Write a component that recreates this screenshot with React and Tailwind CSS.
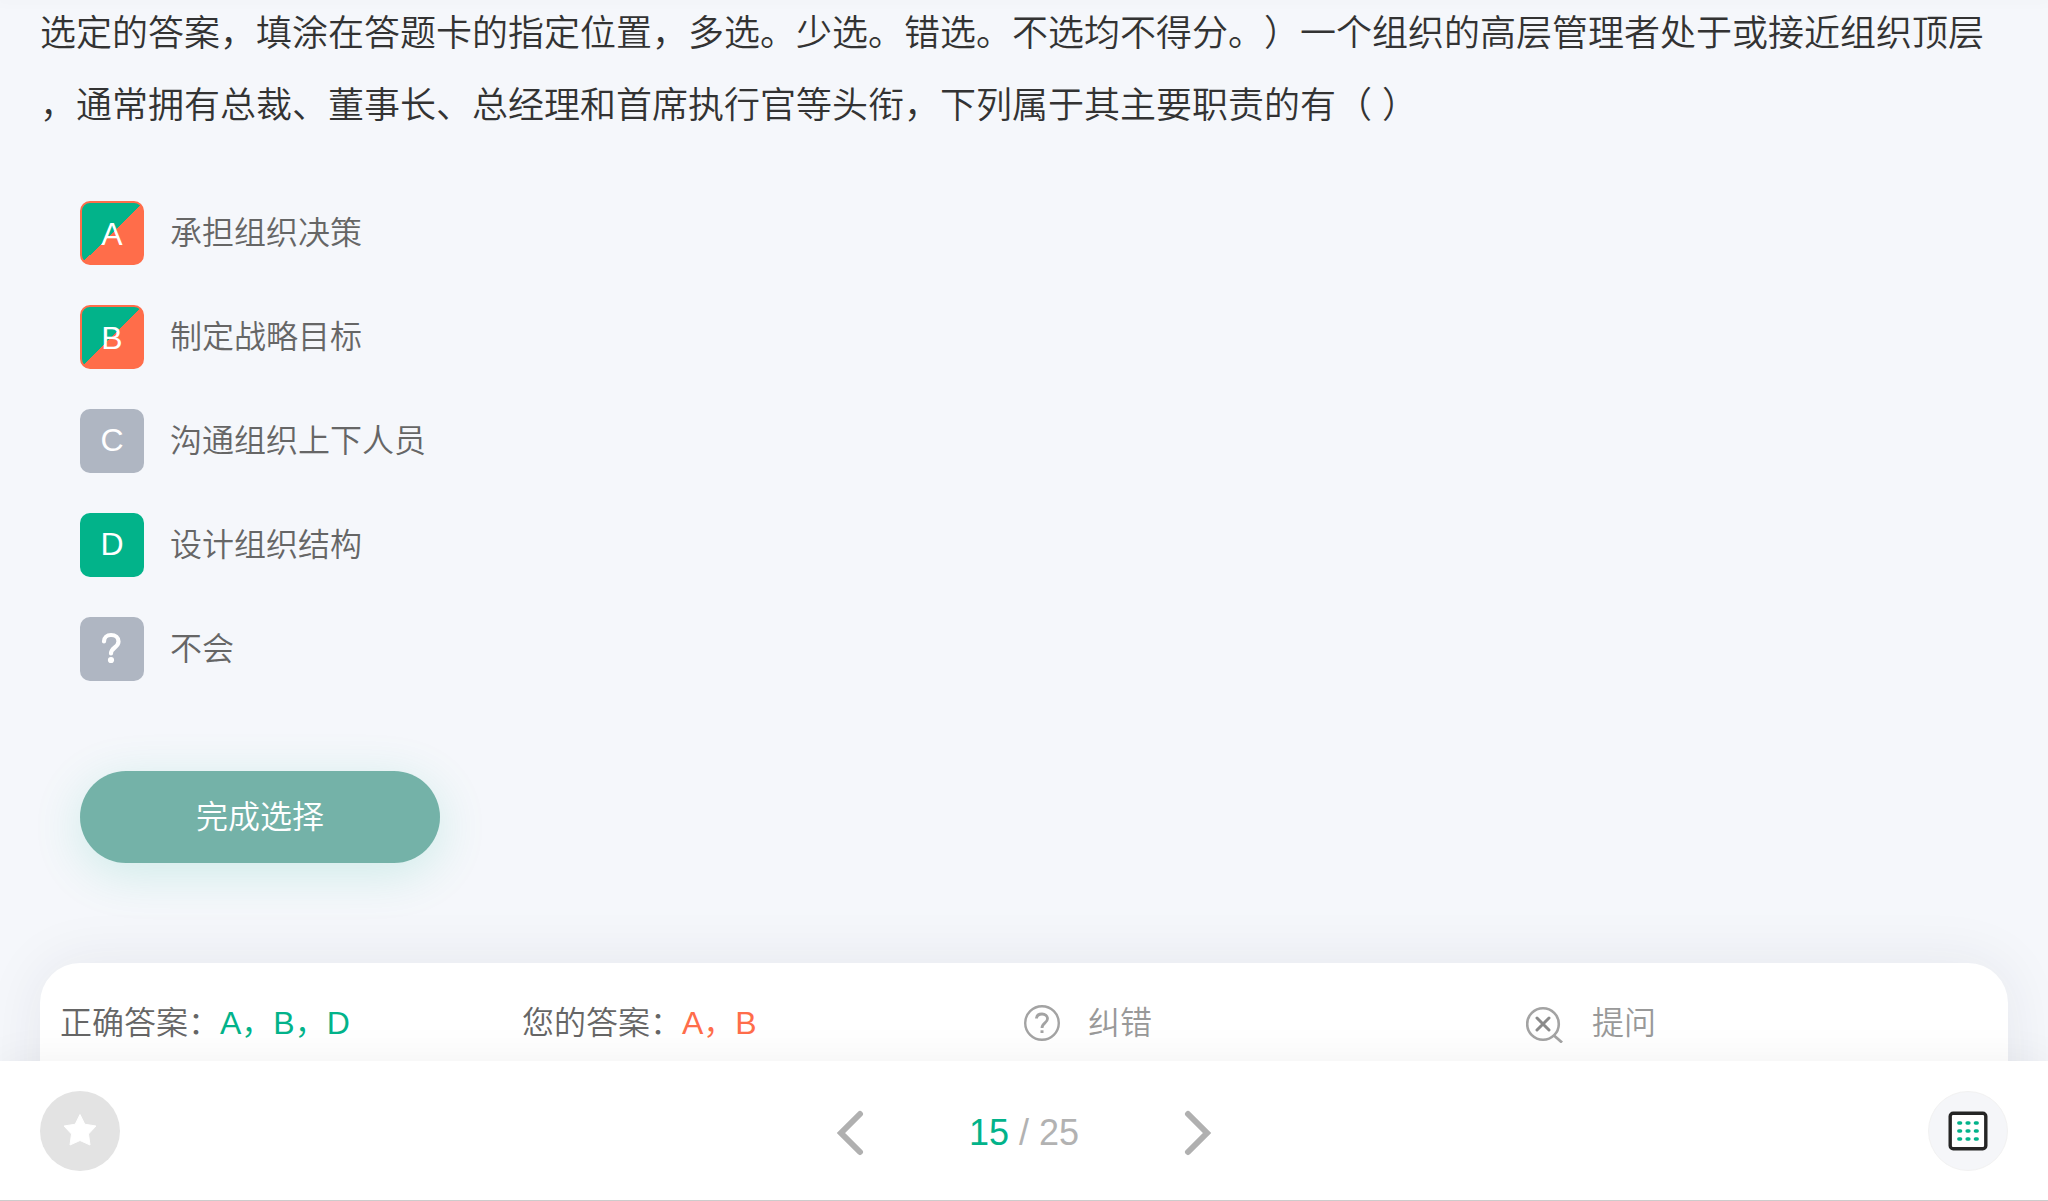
import React, { useState } from 'react';
import clsx from 'clsx';

const QUESTION =
    '选定的答案，填涂在答题卡的指定位置，多选。少选。错选。不选均不得分。）一个组织的高层管理者处于或接近组织顶层，通常拥有总裁、董事长、总经理和首席执行官等头衔，下列属于其主要职责的有（ ）';

const OPTIONS = [
    { key: 'A', text: '承担组织决策', state: 'picked' },
    { key: 'B', text: '制定战略目标', state: 'picked' },
    { key: 'C', text: '沟通组织上下人员', state: 'idle' },
    { key: 'D', text: '设计组织结构', state: 'missed' },
    { key: 'unknown', text: '不会', state: 'idle' },
];

const QuestionMark = () => (
    <svg viewBox="0 0 64 64" className="w-16 h-16" fill="none" aria-hidden="true">
        <path
            d="M24 24.5C24 20.5 27 18 31 18C35.500 18 38.500 20.800 38.500 24.500C38.500 30.500 31 30.500 31 36.500"
            stroke="white"
            strokeWidth="4.2"
            strokeLinecap="round"
        />
        <circle cx="31" cy="43" r="3.1" fill="white" />
    </svg>
);

const Option = ({ option, onSelect }) => (
    <button type="button" onClick={() => onSelect(option.key)} className="flex items-center gap-[26px] text-left">
        <span
            className={clsx(
                'w-16 h-16 rounded-[10px] text-center text-white leading-[62px] overflow-hidden',
                option.state === 'picked' &&
                    'border-2 border-[#ff6d4a] bg-[linear-gradient(135deg,#02b38a_50%,#ff6d4a_50%)]',
                option.state === 'missed' && 'bg-[#02b38a]',
                option.state === 'idle' && 'bg-[#afb6c2]'
            )}
        >
            {option.key === 'unknown' ? <QuestionMark /> : option.key}
        </span>
        <span className="text-[#666]">{option.text}</span>
    </button>
);

const HelpIcon = () => (
    <svg viewBox="0 0 36 36" className="w-9 h-9" fill="none" stroke="#a3a3a3" aria-hidden="true">
        <circle cx="18" cy="18" r="16.8" strokeWidth="2.4" />
        <path d="M12.500 13.500C12.700 10.500 15 9 18 9C21.200 9 23.500 11 23.500 13.800C23.500 18 18 17.800 18 23" strokeWidth="2.8" />
        <path d="M18 25.300V28" strokeWidth="3" />
    </svg>
);

const AskIcon = () => (
    <svg viewBox="0 0 38 40" className="w-[38px] h-10" fill="none" stroke="#a3a3a3" aria-hidden="true">
        <circle cx="17" cy="21" r="15.800" strokeWidth="2.6" />
        <path d="M28 32.500L36 39.500" strokeWidth="2.8" />
        <path d="M11 15L23 27M23 15L11 27" stroke="#8a8a8a" strokeWidth="3" strokeLinecap="round" />
    </svg>
);

const Chevron = ({ points }) => (
    <svg viewBox="0 0 28 46" className="w-7 h-[46px]" fill="none" aria-hidden="true">
        <polyline points={points} stroke="#b0b0b0" strokeWidth="6" strokeLinecap="round" />
    </svg>
);

const StarIcon = () => (
    <svg viewBox="0 0 36 36" className="w-9 h-9" aria-hidden="true">
        <path
            d="M18 1.500L22.800 11.200L34 13L26.500 21L28 32L18 27.500L8 32L9.500 21L2 13L13.200 11.200Z"
            fill="white"
            stroke="white"
            strokeWidth="1"
            strokeLinejoin="round"
        />
    </svg>
);

const SheetIcon = () => (
    <svg viewBox="0 0 40 40" className="w-10 h-10" aria-hidden="true">
        <rect x="2.200" y="2.200" width="35.600" height="35.600" rx="3" fill="white" stroke="#252525" strokeWidth="3.400" />
        {[12, 20, 28].map(y =>
            [11.7, 20, 28.3].map(x => (
                <rect key={`${x}-${y}`} x={x - 2.6} y={y - 1.7} width="5.200" height="3.400" rx="1.700" fill="#02b38a" />
            ))
        )}
    </svg>
);

const AnswerPanel = () => (
    <section className="mx-10 mt-25 h-60 shrink-0 rounded-[40px] bg-white px-5 pt-9 shadow-[0_0_60px_rgba(40,40,70,0.08)]">
        <div className="grid grid-cols-[23fr_25fr_25fr_23fr] items-center leading-12">
            <p className="text-[#666]">
                正确答案：<span className="text-[#02b38a]">A，B，D</span>
            </p>
            <p className="text-[#666]">
                您的答案：<span className="text-[#ff6d4a]">A，B</span>
            </p>
            <button type="button" className="flex items-center gap-7 text-[#999]">
                <HelpIcon />
                纠错
            </button>
            <button type="button" className="flex items-center gap-7 text-[#999]">
                <AskIcon />
                提问
            </button>
        </div>
    </section>
);

const App = () => {
    const [page, setPage] = useState(15);
    const [, setSelected] = useState(null);
    const total = 25;

    return (
        <div className="flex h-screen flex-col overflow-hidden bg-[#f5f7fb] text-[32px] font-[350] font-['Liberation_Sans','Noto_Sans_CJK_SC',sans-serif] [text-spacing-trim:space-all]">
            <div className="h-0 shrink-0 shadow-[0_0_12px_4px_rgba(0,0,0,0.02)]" />
            <main className="flex min-h-0 flex-1 flex-col overflow-hidden">
                <h1 className="-mt-0.5 shrink-0 px-10 text-4xl leading-[72px] font-[350] text-[#333] [line-break:anywhere]">
                    {QUESTION}
                </h1>

                <div className="mt-[59px] flex shrink-0 flex-col items-start gap-10 px-20">
                    {OPTIONS.map(option => (
                        <Option key={option.key} option={option} onSelect={setSelected} />
                    ))}
                </div>

                <button
                    type="button"
                    className="mt-[90px] ml-20 h-[92px] w-90 shrink-0 rounded-full bg-[#74b2a8] text-white shadow-[0_10px_50px_rgba(2,179,138,0.16)]"
                >
                    完成选择
                </button>

                <AnswerPanel />
            </main>

            <footer className="relative flex h-35 shrink-0 items-center justify-between border-b border-[#ccc] bg-white px-10 shadow-[0_0_40px_rgba(0,0,0,0.06)]">
                <button
                    type="button"
                    aria-label="收藏"
                    className="flex h-20 w-20 items-center justify-center rounded-full bg-[#e3e3e3]"
                >
                    <StarIcon />
                </button>

                <nav className="flex items-center gap-[105px] pt-1 text-4xl text-[#b2b2b2]">
                    <button type="button" aria-label="上一题" onClick={() => setPage(Math.max(1, page - 1))}>
                        <Chevron points="24,4 5,23 24,42" />
                    </button>
                    <span>
                        <span className="text-[#02b38a]">{page}</span> / {total}
                    </span>
                    <button type="button" aria-label="下一题" onClick={() => setPage(Math.min(total, page + 1))}>
                        <Chevron points="4,4 23,23 4,42" />
                    </button>
                </nav>

                <button
                    type="button"
                    aria-label="答题卡"
                    className="flex h-20 w-20 items-center justify-center rounded-full border border-[#f2f2f2] bg-[#f5f6f9]"
                >
                    <SheetIcon />
                </button>
            </footer>
        </div>
    );
};

export default App;
